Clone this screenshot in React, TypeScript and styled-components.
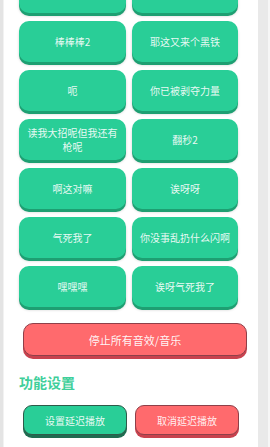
import React from 'react';
import styled, { createGlobalStyle } from 'styled-components';

const GlobalStyle = createGlobalStyle`
  html, body {
    margin: 0;
    padding: 0;
    background: #ffffff;
    font-family: "Noto Sans CJK SC", "Noto Sans", sans-serif;
  }
`;

const Tela = styled.div`
  display: flex;
  width: 270px;
  height: 447px;
  overflow: hidden;
  background: #ffffff;
`;

const BordaEsquerda = styled.div`
  width: 3px;
  background: #e4e4e4;
  border-right: 1px solid #f2f2f2;
`;

const BordaDireita = styled.div`
  width: 10px;
  margin-left: auto;
  background: #e9e9e9;
  border-right: 2px solid #f6f6f6;
`;

const Conteudo = styled.div`
  width: 254px;
  display: flex;
  flex-direction: column;
`;

const Grade = styled.div`
  display: grid;
  grid-template-columns: 107px 106px;
  column-gap: 6px;
  row-gap: 8px;
  margin: -28px 0 0 15px;
`;

const BotaoSom = styled.button`
  height: 41px;
  border: none;
  border-radius: 10px;
  background: #29ce97;
  box-shadow: 0 3px 0 #1e9f72, 0 3px 3px rgba(0, 0, 0, 0.18);
  color: rgba(255, 255, 255, 0.9);
  font-family: "Noto Sans CJK SC", "Noto Sans", sans-serif;
  font-size: 10px;
  line-height: 14px;
  padding: 0 8px;
  display: flex;
  align-items: center;
  justify-content: center;
  text-align: center;
`;

const BotaoParar = styled.button`
  margin: 16px 0 0 19px;
  width: 224px;
  height: 33px;
  border: 1px solid #8e4049;
  border-radius: 10px;
  background: #ff6a6d;
  box-shadow: 0 3px 0 #c8424e;
  color: rgba(255, 255, 255, 0.95);
  font-family: "Noto Sans CJK SC", "Noto Sans", sans-serif;
  font-size: 11px;
`;

const Titulo = styled.h2`
  margin: 17px 0 0 15px;
  font-size: 14px;
  line-height: 18px;
  font-weight: 700;
  color: #3fcf9b;
`;

const LinhaAcoes = styled.div`
  display: flex;
  gap: 8px;
  margin: 14px 0 0 19px;
`;

const BotaoAcao = styled.button<{ cor: 'verde' | 'vermelho' }>`
  width: 104px;
  height: 30px;
  border: 1px solid ${p => (p.cor === 'verde' ? '#2f5a4a' : '#8e4049')};
  border-radius: 9px;
  background: ${p => (p.cor === 'verde' ? '#29ce97' : '#ff6a6d')};
  box-shadow: 0 3px 0 ${p => (p.cor === 'verde' ? '#1f6b50' : '#c8424e')};
  color: rgba(255, 255, 255, 0.9);
  font-family: "Noto Sans CJK SC", "Noto Sans", sans-serif;
  font-size: 10px;
`;

const sons = [
  '嗝', '嗝了',
  '棒棒棒2', '耶这又来个黑铁',
  '呃', '你已被剥夺力量',
  '读我大招呢但我还有枪呢', '翻秒2',
  '啊这对嘛', '诶呀呀',
  '气死我了', '你没事乱扔什么闪啊',
  '嘿嘿嘿', '诶呀气死我了',
];

export default function App() {
  return (
    <>
      <GlobalStyle />
      <Tela>
        <BordaEsquerda />
        <Conteudo>
          <Grade>
            {sons.map((s, i) => (
              <BotaoSom key={i}>{s}</BotaoSom>
            ))}
          </Grade>
          <BotaoParar>停止所有音效/音乐</BotaoParar>
          <Titulo>功能设置</Titulo>
          <LinhaAcoes>
            <BotaoAcao cor="verde">设置延迟播放</BotaoAcao>
            <BotaoAcao cor="vermelho">取消延迟播放</BotaoAcao>
          </LinhaAcoes>
        </Conteudo>
        <BordaDireita />
      </Tela>
    </>
  );
}
